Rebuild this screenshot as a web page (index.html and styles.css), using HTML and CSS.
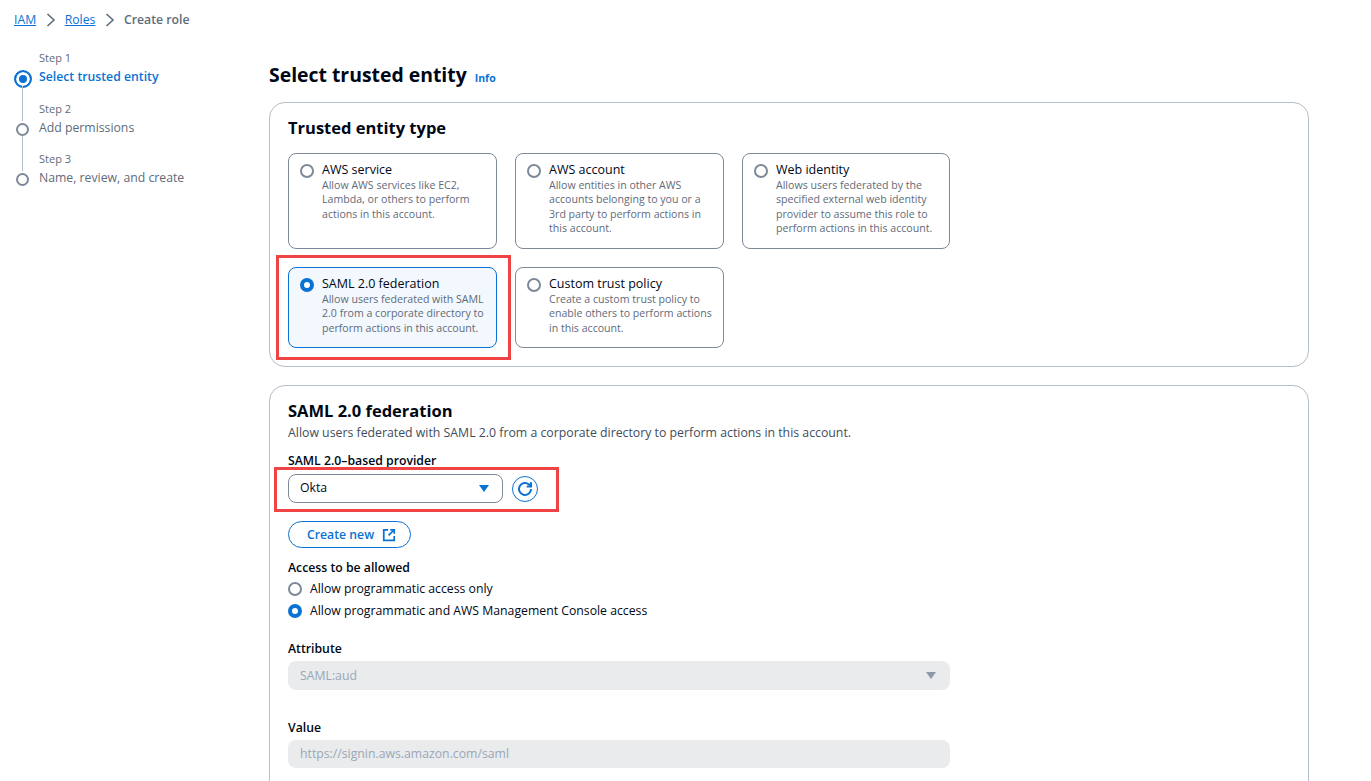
FILE: index.html
```html
<!DOCTYPE html>
<html lang="en">
  <head>
    <meta charset="UTF-8" />
    <meta name="viewport" content="width=device-width, initial-scale=1.0" />
    <title>Create role</title>
    <link rel="stylesheet" href="styles.css">
  </head>
  <body>
    <nav class="crumbs">
      <a href="#">IAM</a>
      <svg class="crumb-sep" viewBox="0 0 10 14"><path d="M1.500 1l6.500 6-6.500 6" /></svg>
      <a href="#">Roles</a>
      <svg class="crumb-sep" viewBox="0 0 10 14"><path d="M1.500 1l6.500 6-6.500 6" /></svg>
      <span class="crumb-current">Create role</span>
    </nav>

    <div class="layout">
      <ol class="steps">
        <li class="step step-first">
          <div class="step-track"><span class="step-dot step-dot-active"></span></div>
          <div class="step-text">
            <small>Step 1</small>
            <strong>Select trusted entity</strong>
          </div>
        </li>
        <li class="step">
          <div class="step-track"><span class="step-line"></span><span class="step-dot"></span></div>
          <div class="step-text">
            <small>Step 2</small>
            <span>Add permissions</span>
          </div>
        </li>
        <li class="step">
          <div class="step-track"><span class="step-line"></span><span class="step-dot"></span></div>
          <div class="step-text">
            <small>Step 3</small>
            <span>Name, review, and create</span>
          </div>
        </li>
      </ol>

      <main class="content">
        <div class="page-head">
          <h1>Select trusted entity</h1>
          <a class="info" href="#">Info</a>
        </div>

        <section class="card">
          <h2>Trusted entity type</h2>
          <div class="tiles">
            <div class="tile">
              <span class="radio"></span>
              <div>
                <div class="tile-title">AWS service</div>
                <p>Allow AWS services like EC2, Lambda, or others to perform actions in this account.</p>
              </div>
            </div>
            <div class="tile">
              <span class="radio"></span>
              <div>
                <div class="tile-title">AWS account</div>
                <p>Allow entities in other AWS accounts belonging to you or a 3rd party to perform actions in this account.</p>
              </div>
            </div>
            <div class="tile">
              <span class="radio"></span>
              <div>
                <div class="tile-title">Web identity</div>
                <p>Allows users federated by the specified external web identity provider to assume this role to perform actions in this account.</p>
              </div>
            </div>
            <div class="tile tile-selected">
              <span class="radio radio-on"></span>
              <div>
                <div class="tile-title">SAML 2.0 federation</div>
                <p>Allow users federated with SAML 2.0 from a corporate directory to perform actions in this account.</p>
              </div>
              <span class="callout callout-tile"></span>
            </div>
            <div class="tile">
              <span class="radio"></span>
              <div>
                <div class="tile-title">Custom trust policy</div>
                <p>Create a custom trust policy to enable others to perform actions in this account.</p>
              </div>
            </div>
          </div>
        </section>

        <section class="card card-saml">
          <h2>SAML 2.0 federation</h2>
          <p class="card-desc">Allow users federated with SAML 2.0 from a corporate directory to perform actions in this account.</p>

          <div class="field-label field-label-provider">SAML 2.0–based provider</div>
          <div class="provider-row">
            <div class="select select-provider">
              <span class="select-text">Okta</span>
              <span class="caret"></span>
            </div>
            <button class="icon-btn" aria-label="Refresh">
              <svg viewBox="0 0 16 16"><path d="M14 8a6 6 0 1 1-1.900-4.400l1.500 1.400" /><path d="M14 1.200v4.300H9.700" /></svg>
            </button>
            <span class="callout callout-provider"></span>
          </div>

          <button class="btn-create">
            Create new
            <svg viewBox="0 0 16 16"><path d="M7 2H2v12h12V9" /><path d="M9.500 2H14v4.500" /><path d="M14 2L7.500 8.500" /></svg>
          </button>

          <div class="field-label field-label-access">Access to be allowed</div>
          <div class="radio-list">
            <div class="radio-row"><span class="radio"></span>Allow programmatic access only</div>
            <div class="radio-row"><span class="radio radio-on"></span>Allow programmatic and AWS Management Console access</div>
          </div>

          <div class="field-label field-label-attr">Attribute</div>
          <div class="select select-disabled">
            <span>SAML:aud</span>
            <span class="caret"></span>
          </div>

          <div class="field-label field-label-value">Value</div>
          <div class="select select-disabled select-value">
            <span>https://signin.aws.amazon.com/saml</span>
          </div>
        </section>
      </main>
    </div>
  </body>
</html>
```

FILE: styles.css
```css
html {
  height: 781px;
  overflow: hidden;
}
body {
  font-family: 'Open Sans', 'Noto Sans', sans-serif;
  font-size: 12.250px;
  line-height: 16px;
  margin: 0;
  color: #000716;
  background-color: #fff;
}
a {
  color: #0972d3;
}
.crumbs {
  display: flex;
  align-items: center;
  height: 16px;
  padding: 12px 0 0 14px;
}
.crumb-sep {
  width: 10px;
  height: 14px;
  margin: 0 9px 0 9.500px;
  fill: none;
  stroke: #5f6b7a;
  stroke-width: 1.600;
}
.crumb-current {
  color: #5f6b7a;
  font-weight: 600;
}
.layout {
  display: flex;
  padding-left: 14px;
}
.steps {
  list-style: none;
  width: 255px;
  margin: 0;
  padding: 14px 0 0;
}
.step {
  display: flex;
  height: 50px;
}
.step-first {
  height: 44px;
}
.step-first .step-text {
  padding-bottom: 1px;
}
.step-track {
  display: flex;
  flex-direction: column;
  align-items: center;
  justify-content: flex-end;
  width: 17px;
  margin-right: 8px;
}
.step-line {
  flex: 1;
  width: 1px;
  margin-bottom: 2px;
  background-color: #b6bec9;
}
.step-dot {
  box-sizing: border-box;
  flex: none;
  width: 13px;
  height: 13px;
  margin-bottom: 0;
  border: 2px solid #7d8998;
  border-radius: 50%;
  background-color: #fff;
}
.step-dot-active {
  width: 18px;
  height: 18px;
  margin-bottom: -2px;
  border-color: #0972d3;
  background-color: #0972d3;
  box-shadow: inset 0 0 0 3px #fff;
}
.step-text {
  display: flex;
  flex-direction: column;
  justify-content: flex-end;
  color: #5f6b7a;
}
.step-text small {
  font-size: 11px;
  line-height: 16px;
  margin-bottom: 3px;
}
.step-text strong {
  color: #0972d3;
  font-weight: 600;
}
.content {
  width: 1040px;
  margin-top: 32px;
}
.page-head {
  display: flex;
  align-items: baseline;
  gap: 8px;
  height: 30px;
  margin-bottom: 12px;
}
h1 {
  font-size: 19.400px;
  line-height: 30px;
  margin: 0;
}
.info {
  font-size: 10.500px;
  font-weight: 700;
  text-decoration: none;
}
h2 {
  font-size: 16.500px;
  line-height: 22px;
  margin: 0;
}
.card {
  box-sizing: border-box;
  padding: 14px 18px 18px;
  margin-bottom: 18px;
  border: 1px solid #b6bec9;
  border-radius: 16px;
}
.tiles {
  display: grid;
  grid-template-columns: 209px 209px 208px;
  grid-template-rows: 96px 81px;
  gap: 18px;
  margin-top: 14px;
}
.tile {
  position: relative;
  display: flex;
  gap: 8px;
  padding: 8px 8px 0 11px;
  border: 1px solid #7d8998;
  border-radius: 8px;
}
.tile-selected {
  border-color: #0972d3;
  background-color: #f2f8fd;
}
.tile-title {
  font-size: 12.500px;
  line-height: 16px;
}
.tile p {
  font-size: 10.600px;
  line-height: 14.400px;
  margin: 0;
  color: #5f6b7a;
}
.radio {
  box-sizing: border-box;
  flex: none;
  width: 14px;
  height: 14px;
  margin-top: 2px;
  border: 2px solid #7d8998;
  border-radius: 50%;
  background-color: #fff;
}
.radio-on {
  border: 4px solid #0972d3;
}
.callout {
  position: absolute;
  box-sizing: border-box;
  border: 3px solid #f04444;
  pointer-events: none;
}
.callout-tile {
  top: -13px;
  left: -13px;
  right: -15px;
  bottom: -13px;
}
.callout-provider {
  top: -7px;
  left: -14px;
  width: 285px;
  height: 45px;
}
.card-saml {
  height: 500px;
}
.card-desc {
  font-size: 12.300px;
  margin: 3px 0 0;
  color: #414d5c;
}
.field-label {
  font-weight: 600;
  line-height: 16px;
}
.field-label-provider {
  margin-top: 12px;
}
.field-label-access {
  margin-top: 12px;
}
.field-label-attr {
  margin-top: 19px;
}
.field-label-value {
  margin-top: 30px;
  margin-bottom: 3px;
}
.provider-row {
  position: relative;
  display: flex;
  align-items: center;
  gap: 9px;
  width: 250px;
  margin-top: 5px;
}
.select {
  box-sizing: border-box;
  display: flex;
  align-items: center;
  justify-content: space-between;
  width: 662px;
  height: 29px;
  padding: 0 12px;
  border-radius: 8px;
  margin-top: 4px;
}
.select-provider {
  flex: none;
  width: 215px;
  margin-top: 0;
  padding: 0 11px;
  border: 1px solid #7d8998;
}
.select-text {
  margin-bottom: 2px;
}
.select-disabled {
  background-color: #e9ebed;
  color: #9ba7b6;
}
.select-value {
  height: 28px;
}
.caret {
  width: 0;
  height: 0;
  margin-right: 2px;
  border-left: 5px solid transparent;
  border-right: 5px solid transparent;
  border-top: 7px solid #0972d3;
}
.select-disabled .caret {
  border-top-color: #8d99a8;
}
.icon-btn {
  display: flex;
  align-items: center;
  justify-content: center;
  width: 26px;
  height: 26px;
  padding: 0;
  border: 1px solid #0972d3;
  border-radius: 50%;
  background-color: #fff;
}
.icon-btn svg {
  width: 16px;
  height: 16px;
  fill: none;
  stroke: #0972d3;
  stroke-width: 2;
}
.btn-create {
  display: flex;
  align-items: center;
  gap: 8px;
  height: 27px;
  margin-top: 18px;
  padding: 0 14px 0 18px;
  border: 1px solid #0972d3;
  border-radius: 14px;
  background-color: #fff;
  color: #0972d3;
  font-family: inherit;
  font-size: 12.250px;
  font-weight: 600;
}
.btn-create svg {
  width: 14px;
  height: 14px;
  fill: none;
  stroke: #0972d3;
  stroke-width: 2;
}
.radio-list {
  padding-top: 2px;
}
.radio-row {
  display: flex;
  align-items: center;
  gap: 8px;
  height: 22px;
}
.radio-row .radio {
  margin-top: 0;
}
```
